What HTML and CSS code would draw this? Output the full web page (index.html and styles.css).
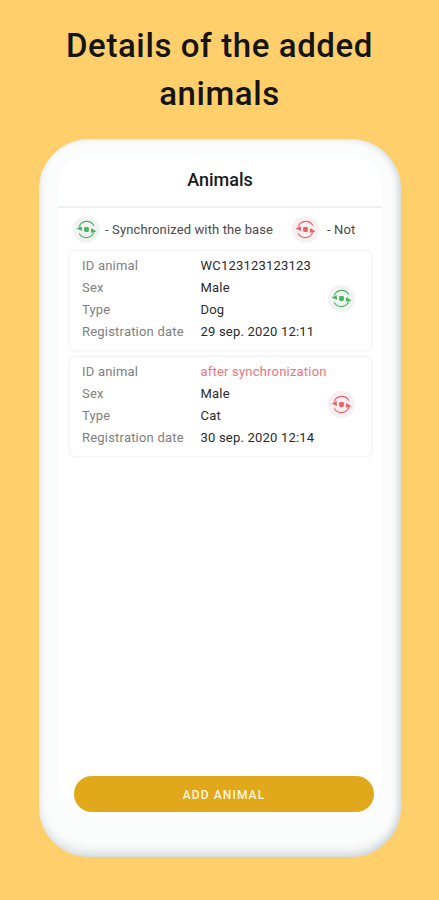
FILE: index.html
```html
<!DOCTYPE html>
<html lang="en">
<head>
<meta charset="utf-8">
<title>Animals</title>
<link rel="stylesheet" href="styles.css">
</head>
<body>
<svg class="defs" width="0" height="0" aria-hidden="true">
  <symbol id="sync" viewBox="0 0 24 24">
    <path d="M4.500 8.500A8.600 8.600 0 0 1 19.500 7.500" fill="none" stroke="currentColor" stroke-width="1.200" stroke-linecap="round"/>
    <path d="M19.500 15.500A8.600 8.600 0 0 1 4.500 16.500" fill="none" stroke="currentColor" stroke-width="1.200" stroke-linecap="round"/>
    <path d="M1.500 11 7 8.500l.5 5z" fill="currentColor"/>
    <path d="M22.500 14 17 10.500l-.5 5z" fill="currentColor"/>
    <rect x="9.500" y="9.500" width="5" height="5" rx="1.400" fill="currentColor"/>
  </symbol>
</svg>
<h1 class="title">Details of the added animals</h1>
<main class="phone">
  <div class="screen">
    <header class="topbar">Animals</header>
    <div class="legend">
      <span class="badge badge-ok"><svg class="icon"><use href="#sync"/></svg></span>
      <span class="legend-text legend-grow">- Synchronized with the base</span>
      <span class="badge badge-bad"><svg class="icon"><use href="#sync"/></svg></span>
      <span class="legend-text legend-end">- Not</span>
    </div>
    <section class="card">
      <dl class="fields">
        <dt>ID animal</dt><dd>WC123123123123</dd>
        <dt>Sex</dt><dd>Male</dd>
        <dt>Type</dt><dd>Dog</dd>
        <dt>Registration date</dt><dd>29 sep. 2020 12:11</dd>
      </dl>
      <span class="badge badge-ok"><svg class="icon"><use href="#sync"/></svg></span>
    </section>
    <section class="card">
      <dl class="fields">
        <dt>ID animal</dt><dd class="pending">after synchronization</dd>
        <dt>Sex</dt><dd>Male</dd>
        <dt>Type</dt><dd>Cat</dd>
        <dt>Registration date</dt><dd>30 sep. 2020 12:14</dd>
      </dl>
      <span class="badge badge-bad"><svg class="icon"><use href="#sync"/></svg></span>
    </section>
    <button class="add" type="button">ADD ANIMAL</button>
  </div>
</main>
</body>
</html>
```
FILE: styles.css
```css
* { box-sizing: border-box; }
html, body { margin: 0; height: 900px; overflow: hidden; }
body {
  background: #ffcf6b;
  font-family: Roboto, "Liberation Sans", sans-serif;
  color: #1c1c1c;
  padding-top: 22px;
}
.defs { display: block; height: 0; }
.title {
  margin: 0 auto;
  width: 360px;
  font-size: 33px;
  line-height: 48px;
  font-weight: 500;
  letter-spacing: 0.6px;
  text-align: center;
  color: #141414;
}
.phone {
  width: 362px;
  height: 718px;
  margin: 21px 0 0 39px;
  padding: 17px 19px 0;
  background: #fbfcfc;
  border-radius: 50px;
  box-shadow: inset 0 -6px 9px rgba(150, 165, 170, 0.28), inset -3px 0 6px rgba(150, 165, 170, 0.3);
}
.screen {
  height: 660px;
  background: #fff;
  border-radius: 30px 30px 36px 36px;
  display: flex;
  flex-direction: column;
}
.topbar {
  height: 52px;
  flex: none;
  display: flex;
  align-items: center;
  justify-content: center;
  padding-bottom: 3px;
  font-size: 18px;
  font-weight: 500;
  color: #1a1a1a;
  border-bottom: 2px solid #eeeff0;
}
.legend {
  display: flex;
  align-items: center;
  padding: 0 0 0 15px;
  height: 43px;
  flex: none;
  font-size: 13px;
  color: #4a4a4a;
}
.legend-text { margin-left: 5px; letter-spacing: 0.12px; }
.legend-grow { width: 187px; }
.legend-end { margin-left: 8px; }
.badge {
  width: 27px;
  height: 27px;
  flex: none;
  border-radius: 50%;
  display: flex;
  align-items: center;
  justify-content: center;
  background: #f1f3f2;
}
.badge-ok { color: #4cb264; }
.badge-bad { color: #ef5f67; background: #f7f0f1; }
.icon { width: 23px; height: 23px; display: block; }
.card {
  width: 301px;
  height: 99px;
  margin: 0 0 7px 12px;
  padding: 0 16px 5px 12px;
  flex: none;
  display: flex;
  align-items: center;
  background: #fff;
  border-radius: 5px;
  box-shadow: 0 0 3px rgba(120, 125, 135, 0.25);
}
.fields {
  margin: 0;
  flex: 1;
  display: grid;
  grid-template-columns: 118.500px 1fr;
  grid-auto-rows: 22px;
  align-items: center;
  font-size: 13px;
  letter-spacing: 0.2px;
}
.fields dt { color: #808080; }
.fields dd { margin: 0; color: #2a2a2a; white-space: nowrap; }
.fields dd.pending { color: #f0747b; }
.add {
  width: 300px;
  height: 36px;
  margin: auto 0 4px 16px;
  padding: 2px 0 0;
  flex: none;
  border: 0;
  border-radius: 18px;
  background: #e2a81c;
  color: #fff6df;
  font: 500 12px Roboto, "Liberation Sans", sans-serif;
  letter-spacing: 1.1px;
}
```
